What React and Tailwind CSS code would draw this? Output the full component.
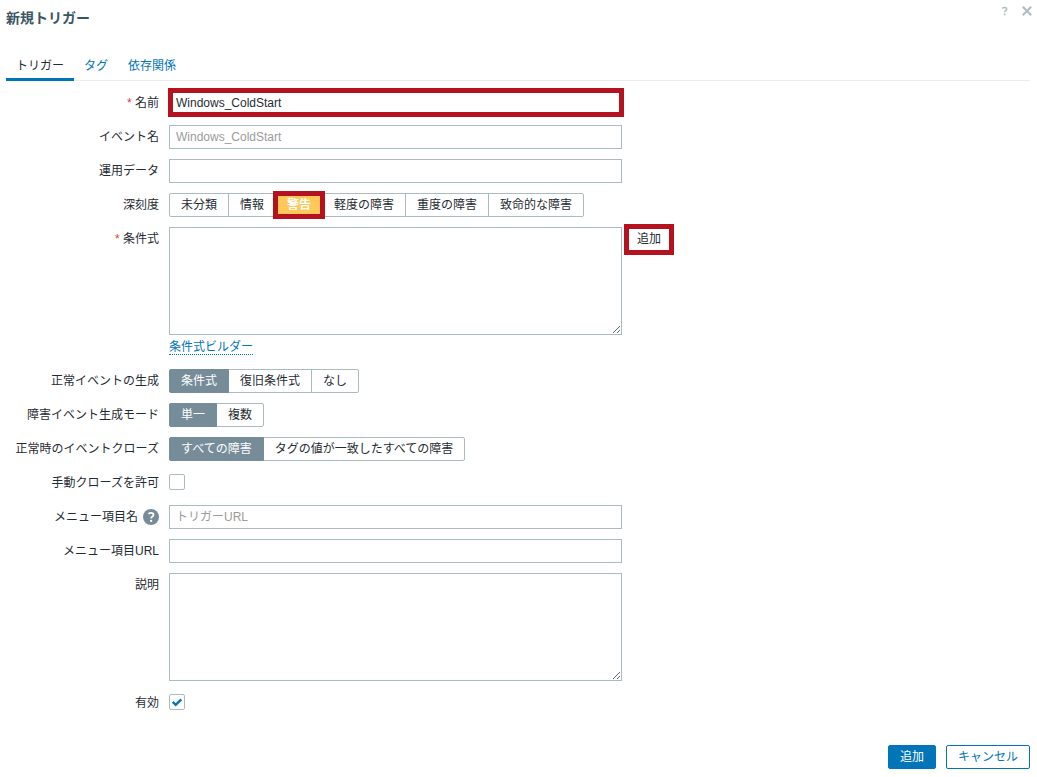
import React, { useState } from 'react';

const inputClass =
  'block h-6 w-full border border-[#acbbc2] bg-white px-1.5 text-xs text-[#1f2c33] placeholder:text-[#9b9b9b] outline-none focus:border-[#0275b8]';

const textareaClass =
  'block h-[108px] w-[453px] max-w-full resize-y border border-[#acbbc2] bg-white px-1.5 py-1 text-xs outline-none focus:border-[#0275b8]';

const severities = ['未分類', '情報', '警告', '軽度の障害', '重度の障害', '致命的な障害'];
const okEvents = ['条件式', '復旧条件式', 'なし'];
const problemModes = ['単一', '複数'];
const okCloses = ['すべての障害', 'タグの値が一致したすべての障害'];

const tabs = ['トリガー', 'タグ', '依存関係'];

const Row = ({ label, htmlFor, id, required, help, children }) => (
  <div className="flex items-start gap-2.5">
    <div className="flex min-h-6 w-[153px] shrink-0 items-center justify-end gap-[5px] text-right leading-6">
      {htmlFor ? (
        <label htmlFor={htmlFor}>
          {required && <span className="text-[#e33734]">* </span>}
          {label}
        </label>
      ) : (
        <span id={id}>{label}</span>
      )}
      {help && (
        <button
          type="button"
          aria-label="?"
          className="flex size-4 items-center justify-center rounded-full bg-[#768d99] text-white"
        >
          <HelpMark className="h-2.5 w-2" />
        </button>
      )}
    </div>
    <div className="min-w-0 flex-1">{children}</div>
  </div>
);

const HelpMark = ({ className }) => (
  <svg viewBox="0 0 8 10" className={className} fill="none" stroke="currentColor" strokeWidth="1.8">
    <path d="M1.4 1.9C2.1 1.3 3 0.9 4 0.9c1.5 0 2.5.7 2.5 1.9 0 1.1-.7 1.5-1.4 2-.7.5-1 .8-1 1.7" />
    <path d="M3.1 8.9h2" strokeWidth="2" />
  </svg>
);

// Red frame drawn on top of a control
const Marker = ({ className }) => (
  <span className={`pointer-events-none absolute z-10 border-5 border-[#b5121f] ${className}`} />
);

const Segmented = ({ name, labelledBy, options, value, onChange, severity }) => (
  <div role="radiogroup" aria-labelledby={labelledBy} className="flex">
    {options.map((option) => (
      <label
        key={option}
        className="relative -ml-px cursor-pointer first:ml-0 has-checked:z-1 first:*:rounded-l-xs last:*:rounded-r-xs"
      >
        <input
          type="radio"
          name={name}
          className="peer sr-only"
          checked={value === option}
          onChange={() => onChange(option)}
        />
        <span
          className={`block h-6 border border-[#acbbc2] px-[11px] leading-[22px] whitespace-nowrap peer-checked:text-white ${
            severity
              ? 'peer-checked:border-[#ffc859] peer-checked:bg-[#ffc859] peer-checked:font-bold'
              : 'peer-checked:border-[#768d99] peer-checked:bg-[#768d99]'
          }`}
        >
          {option}
        </span>
        {severity && option === '警告' && <Marker className="-inset-0.5" />}
      </label>
    ))}
  </div>
);

const Checkbox = ({ id, checked, onChange }) => (
  <div className="grid h-6 w-4 items-start pt-[3px]">
    <input
      id={id}
      type="checkbox"
      checked={checked}
      onChange={(e) => onChange(e.target.checked)}
      className="col-start-1 row-start-1 size-4 appearance-none rounded-xs border border-[#acbbc2] bg-white"
    />
    {checked && (
      <svg
        viewBox="0 0 16 16"
        className="pointer-events-none col-start-1 row-start-1 size-4 text-[#0275b8]"
        fill="none"
        stroke="currentColor"
        strokeWidth="2.4"
      >
        <path d="M3.7 7.9l3 3 5.6-5.6" />
      </svg>
    )}
  </div>
);

export default function App() {
  const [tab, setTab] = useState('トリガー');
  const [name, setName] = useState('Windows_ColdStart');
  const [severity, setSeverity] = useState('警告');
  const [okEvent, setOkEvent] = useState('条件式');
  const [problemMode, setProblemMode] = useState('単一');
  const [okClose, setOkClose] = useState('すべての障害');
  const [manualClose, setManualClose] = useState(false);
  const [enabled, setEnabled] = useState(true);

  return (
    <div
      lang="ja"
      className="min-h-screen bg-white pr-[7px] pb-2 pl-1.5 font-['Liberation_Sans','Noto_Sans_CJK_JP',sans-serif] text-xs text-[#1f2c33]"
    >
      <header className="flex h-12 items-start justify-between">
        <h1 className="pt-2 text-sm font-bold text-[#3c5563]">新規トリガー</h1>
        <div className="-mr-0.5 flex items-center gap-3.5 pt-1.5 text-[#b3bdc4]">
          <a href="#help" aria-label="?">
            <HelpMark className="h-2.5 w-[7px]" />
          </a>
          <button type="button" aria-label="×">
            <svg viewBox="0 0 10 10" className="size-2.5" stroke="currentColor" strokeWidth="2.2">
              <path d="M0.8 0.8l8.4 8.4M9.2 0.8L0.8 9.2" />
            </svg>
          </button>
        </div>
      </header>

      <nav className="flex border-b border-[#ebeef0]">
        {tabs.map((item) => (
          <a
            key={item}
            href="#tab"
            onClick={(e) => {
              e.preventDefault();
              setTab(item);
            }}
            className={`-mb-px block border-b-3 px-2.5 pt-1.5 leading-6 ${
              tab === item ? 'border-[#0275b8] text-[#1f2c33]' : 'border-transparent text-[#0275b8]'
            }`}
          >
            {item}
          </a>
        ))}
      </nav>

      <form className="mt-2.5" onSubmit={(e) => e.preventDefault()}>
        <div className="flex flex-col gap-2.5">
          <Row label="名前" htmlFor="name" required>
            <div className="relative w-[453px] max-w-full">
              <input id="name" className={inputClass} value={name} onChange={(e) => setName(e.target.value)} />
              <Marker className="-top-[3px] -right-0.5 -bottom-0.5 -left-px" />
            </div>
          </Row>
          <Row label="イベント名" htmlFor="event_name">
            <div className="w-[453px] max-w-full">
              <input id="event_name" className={inputClass} placeholder={name} />
            </div>
          </Row>
          <Row label="運用データ" htmlFor="opdata">
            <div className="w-[453px] max-w-full">
              <input id="opdata" className={inputClass} />
            </div>
          </Row>
          <Row label="深刻度" id="severity">
            <Segmented
              name="severity"
              labelledBy="severity"
              options={severities}
              value={severity}
              onChange={setSeverity}
              severity
            />
          </Row>
          <Row label="条件式" htmlFor="expression" required>
            <div className="flex items-start gap-[3px]">
              <textarea id="expression" className={textareaClass} />
              <div className="relative shrink-0">
                <button type="button" className="block h-6 px-3">
                  追加
                </button>
                <Marker className="-top-[3px] -right-px -bottom-1 -left-px" />
              </div>
            </div>
            <a
              href="#builder"
              className="mt-[5px] mb-1 block w-fit border-b border-dotted border-[#0275b8] leading-[14px] text-[#0275b8]"
            >
              条件式ビルダー
            </a>
          </Row>
          <Row label="正常イベントの生成" id="ok_event">
            <Segmented
              name="ok_event"
              labelledBy="ok_event"
              options={okEvents}
              value={okEvent}
              onChange={setOkEvent}
            />
          </Row>
          <Row label="障害イベント生成モード" id="problem_mode">
            <Segmented
              name="problem_mode"
              labelledBy="problem_mode"
              options={problemModes}
              value={problemMode}
              onChange={setProblemMode}
            />
          </Row>
          <Row label="正常時のイベントクローズ" id="ok_close">
            <Segmented
              name="ok_close"
              labelledBy="ok_close"
              options={okCloses}
              value={okClose}
              onChange={setOkClose}
            />
          </Row>
          <Row label="手動クローズを許可" htmlFor="manual_close">
            <Checkbox id="manual_close" checked={manualClose} onChange={setManualClose} />
          </Row>
          <Row label="メニュー項目名" htmlFor="url_name" help>
            <div className="w-[453px] max-w-full">
              <input id="url_name" className={inputClass} placeholder="トリガーURL" />
            </div>
          </Row>
          <Row label="メニュー項目URL" htmlFor="url">
            <div className="w-[453px] max-w-full">
              <input id="url" className={inputClass} />
            </div>
          </Row>
          <Row label="説明" htmlFor="description">
            <textarea id="description" className={textareaClass} />
          </Row>
          <Row label="有効" htmlFor="enabled">
            <Checkbox id="enabled" checked={enabled} onChange={setEnabled} />
          </Row>
        </div>

        <div className="mt-[30px] flex justify-end gap-2.5">
          <button type="submit" className="h-6 rounded-xs border border-[#0275b8] bg-[#0275b8] px-[11px] text-white">
            追加
          </button>
          <button type="button" className="h-6 rounded-xs border border-[#0275b8] bg-white px-[11px] text-[#0275b8]">
            キャンセル
          </button>
        </div>
      </form>
    </div>
  );
}
